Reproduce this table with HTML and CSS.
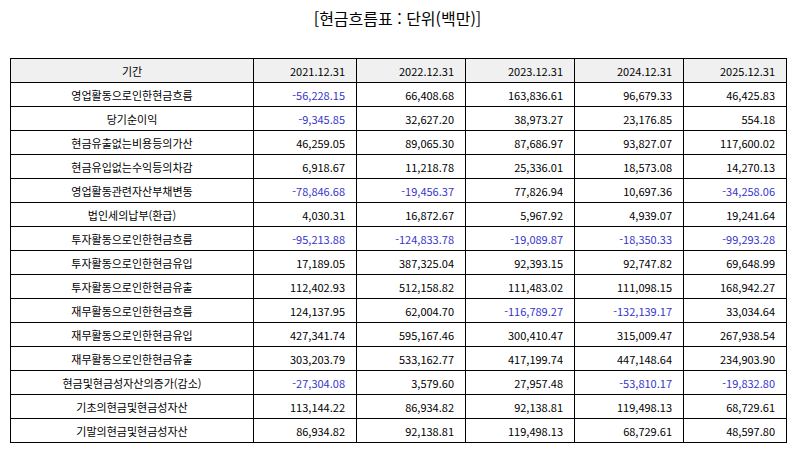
FILE: index.html
```html
<!DOCTYPE html>
<html lang="ko">
<head>
<meta charset="utf-8">
<link rel="stylesheet" href="styles.css">
</head>
<body>
<div class="page">
  <h1 class="title">[현금흐름표 : 단위(백만)]</h1>
  <table class="cf">
    <colgroup>
      <col class="c-label"><col class="c-a"><col class="c-b"><col class="c-b"><col class="c-b"><col class="c-a">
    </colgroup>
    <thead>
      <tr><th class="lbl">기간</th><th>2021.12.31</th><th>2022.12.31</th><th>2023.12.31</th><th>2024.12.31</th><th>2025.12.31</th></tr>
    </thead>
    <tbody>
      <tr><td class="lbl">영업활동으로인한현금흐름</td><td class="neg">-56,228.15</td><td>66,408.68</td><td>163,836.61</td><td>96,679.33</td><td>46,425.83</td></tr>
      <tr><td class="lbl">당기순이익</td><td class="neg">-9,345.85</td><td>32,627.20</td><td>38,973.27</td><td>23,176.85</td><td>554.18</td></tr>
      <tr><td class="lbl">현금유출없는비용등의가산</td><td>46,259.05</td><td>89,065.30</td><td>87,686.97</td><td>93,827.07</td><td>117,600.02</td></tr>
      <tr><td class="lbl">현금유입없는수익등의차감</td><td>6,918.67</td><td>11,218.78</td><td>25,336.01</td><td>18,573.08</td><td>14,270.13</td></tr>
      <tr><td class="lbl">영업활동관련자산부채변동</td><td class="neg">-78,846.68</td><td class="neg">-19,456.37</td><td>77,826.94</td><td>10,697.36</td><td class="neg">-34,258.06</td></tr>
      <tr><td class="lbl">법인세의납부(환급)</td><td>4,030.31</td><td>16,872.67</td><td>5,967.92</td><td>4,939.07</td><td>19,241.64</td></tr>
      <tr><td class="lbl">투자활동으로인한현금흐름</td><td class="neg">-95,213.88</td><td class="neg">-124,833.78</td><td class="neg">-19,089.87</td><td class="neg">-18,350.33</td><td class="neg">-99,293.28</td></tr>
      <tr><td class="lbl">투자활동으로인한현금유입</td><td>17,189.05</td><td>387,325.04</td><td>92,393.15</td><td>92,747.82</td><td>69,648.99</td></tr>
      <tr><td class="lbl">투자활동으로인한현금유출</td><td>112,402.93</td><td>512,158.82</td><td>111,483.02</td><td>111,098.15</td><td>168,942.27</td></tr>
      <tr><td class="lbl">재무활동으로인한현금흐름</td><td>124,137.95</td><td>62,004.70</td><td class="neg">-116,789.27</td><td class="neg">-132,139.17</td><td>33,034.64</td></tr>
      <tr><td class="lbl">재무활동으로인한현금유입</td><td>427,341.74</td><td>595,167.46</td><td>300,410.47</td><td>315,009.47</td><td>267,938.54</td></tr>
      <tr><td class="lbl">재무활동으로인한현금유출</td><td>303,203.79</td><td>533,162.77</td><td>417,199.74</td><td>447,148.64</td><td>234,903.90</td></tr>
      <tr><td class="lbl">현금및현금성자산의증가(감소)</td><td class="neg">-27,304.08</td><td>3,579.60</td><td>27,957.48</td><td class="neg">-53,810.17</td><td class="neg">-19,832.80</td></tr>
      <tr><td class="lbl">기초의현금및현금성자산</td><td>113,144.22</td><td>86,934.82</td><td>92,138.81</td><td>119,498.13</td><td>68,729.61</td></tr>
      <tr><td class="lbl">기말의현금및현금성자산</td><td>86,934.82</td><td>92,138.81</td><td>119,498.13</td><td>68,729.61</td><td>48,597.80</td></tr>
    </tbody>
  </table>
</div>
</body>
</html>
```
FILE: styles.css
```css
html, body {
  margin: 0;
  padding: 0;
  background: #ffffff;
}
.page {
  width: 794px;
  padding: 0 9px 0 10px;
  box-sizing: border-box;
  font-family: "Noto Sans CJK KR", "Noto Sans", sans-serif;
  color: #000;
}
.title {
  margin: 0;
  height: 58px;
  padding-top: 5px;
  box-sizing: border-box;
  font-size: 16px;
  font-weight: 400;
  line-height: 26px;
  text-align: center;
  color: #000;
}
.cf {
  width: 775px;
  border-collapse: collapse;
  table-layout: fixed;
  font-size: 11px;
}
.c-label { width: 243px; }
.c-a { width: 103px; }
.c-b { width: 109px; }
.cf th, .cf td {
  border: 1px solid #000;
  height: 24px;
  padding: 0 11px 0 4px;
  text-align: right;
  font-weight: 400;
  line-height: 14px;
  white-space: nowrap;
  box-sizing: border-box;
}
.cf th {
  background: #f0f0f0;
}
.cf .lbl {
  text-align: center;
  padding: 0 4px;
}
.cf .neg {
  color: #3535cc;
}
```
